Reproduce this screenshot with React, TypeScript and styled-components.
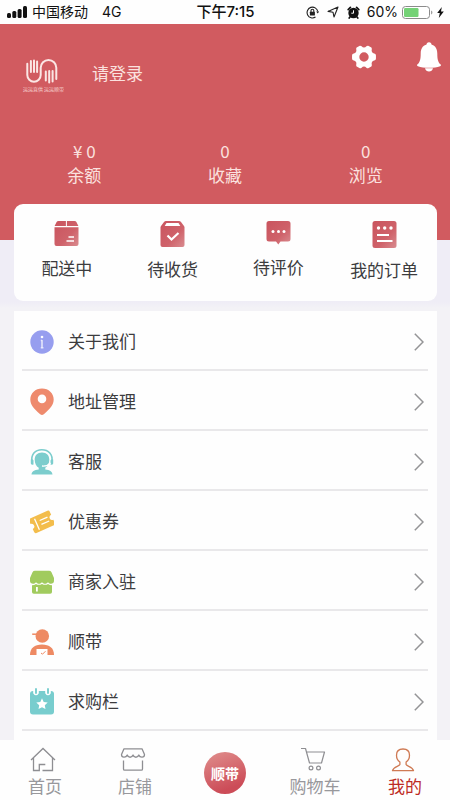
import React from 'react';
import styled, { createGlobalStyle } from 'styled-components';

const GlobalStyle = createGlobalStyle`
  * { box-sizing: border-box; }
  body {
    margin: 0;
    background: #f3f2f6;
    font-family: "Noto Sans CJK SC", sans-serif;
    font-size: 17px;
    line-height: 24px;
    color: #3c3c3e;
  }
  a { color: inherit; text-decoration: none; }
  button { font: inherit; color: inherit; border: 0; padding: 0; background: none; cursor: pointer; }
  svg { display: block; flex: none; }
`;

const Screen = styled.div`
  display: flex;
  flex-direction: column;
  height: 100vh;
`;

const StatusBar = styled.div`
  flex: none;
  display: grid;
  grid-template-columns: 1fr auto 1fr;
  align-items: center;
  height: 24px;
  padding: 0 6px 0 7px;
  background: #fefefe;
  color: #111;
  font-family: Inter, "Noto Sans CJK SC", sans-serif;
  font-size: 14px;
`;

const StatusGroup = styled.div<{ $end?: boolean }>`
  display: flex;
  align-items: center;
  justify-content: ${(p) => (p.$end ? 'flex-end' : 'flex-start')};
  gap: ${(p) => (p.$end ? '4px' : '5px')};
`;

const Network = styled.span`
  margin-left: 9px;
`;

const StatusIcons = styled.span`
  display: flex;
  align-items: center;
  gap: 8px;
  margin-right: 3px;
`;

const Time = styled.span`
  font-size: 15px;
  font-weight: 500;
`;

const Content = styled.main`
  flex: 1;
  min-height: 0;
  overflow: hidden;
  background: linear-gradient(#efedf6 278px, #f3f2f6 284px);
`;

const Header = styled.header`
  height: 216px;
  background: #d15b60;
  color: #fbe1df;
`;

const Profile = styled.div`
  display: flex;
  justify-content: space-between;
  align-items: flex-start;
  height: 115px;
  padding: 18px 9px 0 22px;
`;

const Login = styled.a`
  display: flex;
  align-items: center;
  gap: 28px;
  padding-top: 16px;
`;

const LoginText = styled.span`
  padding-bottom: 6px;
`;

const Actions = styled.div`
  display: flex;
  align-items: center;
  gap: 41px;
`;

const Stats = styled.div`
  display: grid;
  grid-template-columns: repeat(3, 1fr);
  padding: 0 14px;
`;

const Stat = styled.a`
  display: flex;
  flex-direction: column;
  align-items: center;
`;

const Orders = styled.nav`
  display: grid;
  grid-template-columns: repeat(4, 1fr);
  height: 97px;
  margin: -36px 13px 0 14px;
  padding-top: 17px;
  border-radius: 9px;
  background: #fefefe;
`;

const Order = styled.a`
  display: flex;
  flex-direction: column;
  align-items: center;
  gap: 10px;
`;

const Menu = styled.ul`
  list-style: none;
  margin: 10px 13px 0 14px;
  padding: 0 9px 24px 8px;
  background: #fefefe;
`;

const MenuLink = styled.a`
  display: flex;
  align-items: center;
  gap: 14px;
  height: 60px;
  padding: 3px 4px 0 8px;
  border-bottom: 2px solid #e9e8ea;
`;

const MenuLabel = styled.span`
  flex: 1;
  padding-bottom: 2px;
`;

const TabBar = styled.nav`
  flex: none;
  display: grid;
  grid-template-columns: repeat(5, 1fr);
  height: 60px;
  background: #fefefe;
`;

const Tab = styled.a<{ $active?: boolean }>`
  display: flex;
  flex-direction: column;
  align-items: center;
  gap: 2px;
  padding-top: 7px;
  color: ${(p) => (p.$active ? '#bd2b25' : '#98989c')};

  svg { margin-right: 5px; }
`;

const CenterTab = styled.button`
  align-self: center;
  justify-self: center;
  width: 42px;
  height: 42px;
  margin-top: 6px;
  border-radius: 50%;
  background: linear-gradient(160deg, #e08f8d, #cc4c58 80%);
  color: #fff;
  font-size: 14px;
  font-weight: 700;
`;

const SignalIcon = () => (
  <svg width="20" height="12" viewBox="0 0 20 12" fill="#111">
    <rect x="0" y="7" width="4" height="5" rx="1.5" />
    <rect x="5.3" y="5" width="4" height="7" rx="1.5" />
    <rect x="10.6" y="3" width="4" height="9" rx="1.5" />
    <rect x="16" y="0" width="4" height="12" rx="1.5" />
  </svg>
);

const RotationLockIcon = () => (
  <svg width="13" height="13" viewBox="0 0 13 13" fill="none" stroke="#222" strokeWidth="1.1">
    <path d="M11.8 5.5A5.4 5.4 0 1 0 9.5 11" />
    <path d="M10.2 5.4h3l-1.5 2.2z" fill="#222" stroke="none" />
    <rect x="3.9" y="5.8" width="5" height="3.8" rx=".5" fill="#222" stroke="none" />
    <path d="M5 6V4.600a1.400 1.400 0 0 1 2.800 0V6" />
  </svg>
);

const LocationIcon = () => (
  <svg width="12" height="12" viewBox="0 0 12 12" fill="none" stroke="#222" strokeWidth="1.1" strokeLinejoin="round">
    <path d="M11 1 7 11 6 6.2 1 5.4z" />
  </svg>
);

const AlarmIcon = () => (
  <svg width="13" height="13" viewBox="0 0 13 13">
    <circle cx="6.5" cy="7" r="5.2" fill="#111" />
    <path d="M1.2 3.6 3.4 1.4M11.800 3.600 9.600 1.400M3 11l-.8 1M10 11l.8 1" stroke="#111" strokeWidth="1.7" strokeLinecap="round" />
    <path d="M6.5 4.3V7.2H4.3" stroke="#fff" fill="none" />
  </svg>
);

const BatteryIcon = () => (
  <svg width="31" height="13" viewBox="0 0 31 13">
    <rect x=".5" y=".5" width="27" height="12" rx="3" fill="#fff" stroke="#8b8b8b" />
    <rect x="2" y="2" width="14.5" height="9" rx="1.2" fill="#74d276" />
    <path d="M29.2 4.5c1.6.8 1.6 3.2 0 4z" fill="#8b8b8b" />
  </svg>
);

const BoltIcon = () => (
  <svg width="7" height="11" viewBox="0 0 7 11" fill="#111">
    <path d="M4.8 0 .2 6.1h2.6L1.8 11 6.8 4.6H4z" />
  </svg>
);

const Logo = () => (
  <svg width="42" height="36" viewBox="0 0 42 36" role="img" aria-label="logo">
    <g fill="none" stroke="#fbe6e4" strokeWidth="2" strokeLinecap="round">
      <path d="M5.300 5.800V17a6.700 6.700 0 0 0 13.400 0V9.800a7.800 7.800 0 0 1 15.600 0V21" />
      <path d="M8.900 3V14M12 2.500V14M15.100 3.500V14" />
      <path d="M23.800 13.500v9M27.200 13V24.500M30.600 13V23.500" />
    </g>
    <text x="1" y="33" fontSize="5" fill="#f5cfcd">运运直供 运运顺带</text>
  </svg>
);

const GearIcon = () => (
  <svg width="24" height="24" viewBox="0 0 24 24" fill="#fff">
    <path fillRule="evenodd" d="M7.4.9c.8-.4 1.6-.2 2.2.4.7.9 1.5 1.3 2.4 1.3s1.7-.4 2.4-1.3c.6-.6 1.4-.8 2.2-.4l2.3 1.3c.7.4 1 1.2.9 2-.3 1.2-.2 2 .2 2.8.5.8 1.2 1.2 2.2 1.4.9.1 1.5.7 1.7 1.5.1 1.4.1 2.8 0 4.2-.2.8-.8 1.4-1.7 1.5-1 .2-1.7.6-2.2 1.4-.4.8-.5 1.6-.2 2.8.1.8-.2 1.6-.9 2l-2.3 1.3c-.8.4-1.6.2-2.2-.4-.7-.9-1.5-1.3-2.4-1.3s-1.7.4-2.4 1.3c-.6.6-1.4.8-2.2.4l-2.3-1.3c-.7-.4-1-1.2-.9-2 .3-1.2.2-2-.2-2.8-.5-.8-1.2-1.2-2.2-1.4-.9-.1-1.5-.7-1.7-1.5-.1-1.4-.1-2.8 0-4.2.2-.8.8-1.4 1.7-1.5 1-.2 1.7-.6 2.2-1.4.4-.8.5-1.6.2-2.8-.1-.8.2-1.6.9-2zM12 7.3a4.7 4.7 0 1 0 0 9.4 4.7 4.7 0 0 0 0-9.4z" />
  </svg>
);

const BellIcon = () => (
  <svg width="24" height="30" viewBox="0 0 24 30" fill="#fff">
    <circle cx="12" cy="2.7" r="2.5" />
    <path d="M12 2.3c5.500 0 8.300 3.700 8.300 9.400 0 5.500.7 8.500 3.400 10.800.6.7.2 1.400-.6 1.700-3 1-6.600 1.500-11.100 1.500S3.900 25.200.9 24.200c-.8-.3-1.200-1-.6-1.700 2.700-2.300 3.400-5.300 3.400-10.800 0-5.700 2.800-9.400 8.300-9.400z" />
    <path d="M8 26.200h8c-.6 2.300-2 3.300-4 3.300s-3.400-1-4-3.300z" />
  </svg>
);

const RedGradient = ({ id }: { id: string }) => (
  <defs>
    <linearGradient id={id} x1="0" y1="0" x2="1" y2="1">
      <stop offset="0" stopColor="#c9545e" />
      <stop offset=".6" stopColor="#cf626a" />
      <stop offset="1" stopColor="#d98c90" />
    </linearGradient>
  </defs>
);

const BoxIcon = () => (
  <svg width="25" height="25" viewBox="0 0 25 25">
    <RedGradient id="box" />
    <path d="M4.500 0h7.400v5H.6l2-4Q3.100 0 4.500 0zM12.900 0h7.600q1.400 0 1.900 1l2 4H12.900zM.5 6.200h24V23q0 2-2 2h-20q-2 0-2-2z" fill="url(#box)" />
    <path d="M14.500 16h5.500M12.500 20h7.500" stroke="#fff" strokeWidth="1.7" />
  </svg>
);

const ReceiveIcon = () => (
  <svg width="25" height="26" viewBox="0 0 25 26">
    <RedGradient id="receive" />
    <path d="M6 0h13q1.300 0 2 .9L24 5q.5.7.5 1.500V24q0 2-2 2h-20q-2 0-2-2V6.500Q.5 5.700 1 5L4 .9Q4.700 0 6 0z" fill="url(#receive)" />
    <path d="M6.500 2h12l1.800 3H4.700z" fill="#fff" />
    <path d="m7.500 14.500 4 4 7-6.500" fill="none" stroke="#fff" strokeWidth="2.2" />
  </svg>
);

const ReviewIcon = () => (
  <svg width="25" height="24" viewBox="0 0 25 24">
    <RedGradient id="review" />
    <path d="M3 0h19q2.500 0 2.500 2.500v15.500q0 2.500-2.500 2.500h-7.500L12.300 23.500 10 20.500H3Q.5 20.500.5 18V2.500Q.5 0 3 0z" fill="url(#review)" />
    <g fill="#fff"><circle cx="7" cy="10.5" r="1.5" /><circle cx="12.5" cy="10.5" r="1.5" /><circle cx="18" cy="10.5" r="1.5" /></g>
  </svg>
);

const OrdersIcon = () => (
  <svg width="25" height="27" viewBox="0 0 25 27">
    <RedGradient id="orders" />
    <rect x=".5" y="0" width="24" height="27" rx="2.5" fill="url(#orders)" />
    <g fill="#fff"><circle cx="6.5" cy="7" r="1.7" /><circle cx="12.7" cy="7" r="1.7" /><circle cx="19" cy="7" r="1.7" /></g>
    <path d="M5 14h12M5 20h15.500" stroke="#fff" strokeWidth="1.8" />
  </svg>
);

const InfoIcon = () => (
  <svg width="24" height="24" viewBox="0 0 24 24">
    <circle cx="12" cy="12" r="11.7" fill="#979eef" />
    <circle cx="12" cy="7" r="1.3" fill="#fff" />
    <path d="M12 10v8M10.800 10.400h1.200M10.800 17.700h2.600" stroke="#e9eafc" strokeWidth="1.5" fill="none" />
  </svg>
);

const PinIcon = () => (
  <svg width="24" height="27" viewBox="0 0 24 27">
    <path fillRule="evenodd" fill="#ee8a6d" d="M12 .5c6.700 0 11.700 4.800 11.700 11 0 5-3.400 9.300-9.900 14.800-1.200.9-2.400.9-3.600 0C3.700 20.800.3 16.500.3 11.500.3 5.300 5.300.5 12 .5zM12 6.600a4.300 4.300 0 1 0 0 8.600 4.300 4.300 0 0 0 0-8.600z" />
  </svg>
);

const ServiceIcon = () => (
  <svg width="24" height="27" viewBox="0 0 24 27">
    <path d="M2 14C.8 6.500 5 1.800 11.800 1.800S23 6.500 21.900 13.500" fill="none" stroke="#7ccdcd" strokeWidth="1.6" />
    <path d="M.8 11.500q2-.8 2.700 1v4Q1.500 17.300.8 15.500zM23.200 11.500q-2-.8-2.700 1v4q2 .8 2.700-1z" fill="#7ccdcd" />
    <path d="M12 4.500c4.700 0 7.300 3 7.300 7.200 0 3.600-1.500 6.600-4 8v1.800c4.500.5 7 2 7.200 5H1.500c.2-3 2.700-4.500 7.200-5v-1.800c-2.500-1.400-4-4.400-4-8 0-4.200 2.600-7.200 7.300-7.200z" fill="#7ccdcd" />
    <path d="M20.500 15q-3 3.500-8.500 3" fill="none" stroke="#fff" strokeWidth="1.3" />
  </svg>
);

const TicketIcon = () => (
  <svg width="24" height="24" viewBox="0 0 24 24">
    <g transform="rotate(-24 12 12)">
      <path d="M2.500 4h19q1.800 0 1.800 1.800v3.400a2.700 2.700 0 0 0 0 5.400v3.400q0 1.800-1.800 1.800h-19Q.7 19.800.7 18v-3.400a2.700 2.700 0 0 0 0-5.400V5.800Q.7 4 2.500 4z" fill="#f3bd4c" />
      <path d="M6.500 6v12M10.500 9.700h8.500M10.500 14h8.500" stroke="#fff" strokeWidth="1.3" />
    </g>
  </svg>
);

const MerchantIcon = () => (
  <svg width="24" height="24" viewBox="0 0 24 24" fill="#a1cb5e">
    <path d="M5 .8h14q1.700 0 2.500 1.400L24 8v3c0 1.700-1.500 2.800-3 2.800s-2.500-.8-3-1.600c-.6.8-1.700 1.600-3 1.600s-2.400-.8-3-1.600c-.6.8-1.700 1.600-3 1.600s-2.400-.8-3-1.600c-.5.8-1.500 1.600-3 1.600S0 12.700 0 11V8l2.500-5.800Q3.300.8 5 .8z" />
    <path fillRule="evenodd" d="M2 15.200q2.300 0 4-1.300 2.700 1.800 6 0 3.300 1.800 6 0 1.700 1.300 4 1.300V22q0 1.800-1.800 1.800H3.800Q2 23.800 2 22zM6 17v4.500h1.800V17z" />
  </svg>
);

const CourierIcon = () => (
  <svg width="24" height="26" viewBox="0 0 24 26" fill="#ee8a63">
    <circle cx="12.300" cy="7" r="6.800" />
    <path d="M2.200 5.200h10" stroke="#ee8a63" strokeWidth="1.5" />
    <path d="M0 26c0-7 4.500-10.500 12-10.500S24 19 24 26z" />
    <path d="M6.500 20h11v6h-11z" fill="#fff" />
    <path d="m11 24 1.500 1.200 3-3" stroke="#ee8a63" fill="none" />
  </svg>
);

const WishIcon = () => (
  <svg width="24" height="27" viewBox="0 0 24 27">
    <rect x="0" y="3" width="24" height="23.5" rx="3" fill="#78cdce" />
    <path d="M4 1.500V5Q6 8 8 5V1.500zM16 1.500V5q2 3 4 0V1.500z" fill="#fff" stroke="#fff" strokeWidth="1.6" />
    <path d="M6 1v4M18 1v4" stroke="#78cdce" strokeWidth="1.9" strokeLinecap="round" />
    <path d="m12 10.300 1.700 3.600 4 .5-2.900 2.800.7 3.900-3.500-1.900-3.500 1.900.7-3.900-2.900-2.800 4-.5z" fill="#fff" />
  </svg>
);

const ChevronIcon = () => (
  <svg width="10" height="18" viewBox="0 0 10 18" fill="none" stroke="#949496" strokeWidth="1.5">
    <path d="m.8.8 8.200 8.200-8.200 8.200" />
  </svg>
);

const HomeIcon = () => (
  <svg width="26" height="25" viewBox="0 0 26 25" fill="none" stroke="#8e8e92" strokeWidth="1.3">
    <path d="M1 13 13 1.500 25 13M3.500 11v12.500h5.800v-6h6M12.500 23.500h10V11" />
  </svg>
);

const ShopIcon = () => (
  <svg width="26" height="25" viewBox="0 0 26 25" fill="none" stroke="#8e8e92" strokeWidth="1.3" strokeLinejoin="round">
    <path d="M4 1.800h18l2.500 5.700c0 3.500-4.500 3.500-5.700.5-1.100 3-4.700 3-5.800 0-1.100 3-4.700 3-5.800 0C6 11 1.500 11 1.500 7.500z" />
    <path d="M3.500 13.500V22q0 1.200 1.200 1.200h16.600q1.200 0 1.200-1.200v-8.500" />
  </svg>
);

const CartIcon = () => (
  <svg width="26" height="25" viewBox="0 0 26 25" fill="none" stroke="#8e8e92" strokeWidth="1.2" strokeLinejoin="round">
    <path d="M1 1.500h4.500l4 14.500h12L24.500 5H6.500" />
    <circle cx="11" cy="21" r="1.9" />
    <circle cx="18.500" cy="21" r="1.9" />
  </svg>
);

const MeIcon = () => (
  <svg width="26" height="25" viewBox="0 0 26 25" fill="none" stroke="#cf7a54" strokeWidth="1.3" strokeLinejoin="round">
    <path d="M13 2c4.300 0 6.500 2.600 6.500 6.200 0 3-1.200 5.300-3.400 6.800v2.500c.6 2 6.500 2 7.400 6.200h-21c.9-4.200 6.800-4.200 7.400-6.200V15c-2.200-1.500-3.400-3.800-3.400-6.800C6.500 4.600 8.700 2 13 2z" />
  </svg>
);

const stats = [
  { value: '¥ 0', label: '余额' },
  { value: '0', label: '收藏' },
  { value: '0', label: '浏览' },
];

const orders = [
  { label: '配送中', Icon: BoxIcon },
  { label: '待收货', Icon: ReceiveIcon },
  { label: '待评价', Icon: ReviewIcon },
  { label: '我的订单', Icon: OrdersIcon },
];

const menu = [
  { label: '关于我们', Icon: InfoIcon },
  { label: '地址管理', Icon: PinIcon },
  { label: '客服', Icon: ServiceIcon },
  { label: '优惠券', Icon: TicketIcon },
  { label: '商家入驻', Icon: MerchantIcon },
  { label: '顺带', Icon: CourierIcon },
  { label: '求购栏', Icon: WishIcon },
];

export default function App() {
  return (
    <Screen>
      <GlobalStyle />
      <StatusBar>
        <StatusGroup>
          <SignalIcon />
          <span>中国移动</span>
          <Network>4G</Network>
        </StatusGroup>
        <Time>下午7:15</Time>
        <StatusGroup $end>
          <StatusIcons>
            <RotationLockIcon />
            <LocationIcon />
            <AlarmIcon />
          </StatusIcons>
          <span>60%</span>
          <BatteryIcon />
          <BoltIcon />
        </StatusGroup>
      </StatusBar>
      <Content>
        <Header>
          <Profile>
            <Login href="#login">
              <Logo />
              <LoginText>请登录</LoginText>
            </Login>
            <Actions>
              <button type="button" aria-label="设置"><GearIcon /></button>
              <button type="button" aria-label="消息"><BellIcon /></button>
            </Actions>
          </Profile>
          <Stats>
            {stats.map((s) => (
              <Stat key={s.label} href="#stats">
                <span>{s.value}</span>
                <span>{s.label}</span>
              </Stat>
            ))}
          </Stats>
        </Header>
        <Orders>
          {orders.map(({ label, Icon }) => (
            <Order key={label} href="#orders">
              <Icon />
              <span>{label}</span>
            </Order>
          ))}
        </Orders>
        <Menu>
          {menu.map(({ label, Icon }) => (
            <li key={label}>
              <MenuLink href="#menu">
                <Icon />
                <MenuLabel>{label}</MenuLabel>
                <ChevronIcon />
              </MenuLink>
            </li>
          ))}
        </Menu>
      </Content>
      <TabBar>
        <Tab href="#home"><HomeIcon /><span>首页</span></Tab>
        <Tab href="#shop"><ShopIcon /><span>店铺</span></Tab>
        <CenterTab type="button">顺带</CenterTab>
        <Tab href="#cart"><CartIcon /><span>购物车</span></Tab>
        <Tab href="#me" $active><MeIcon /><span>我的</span></Tab>
      </TabBar>
    </Screen>
  );
}
